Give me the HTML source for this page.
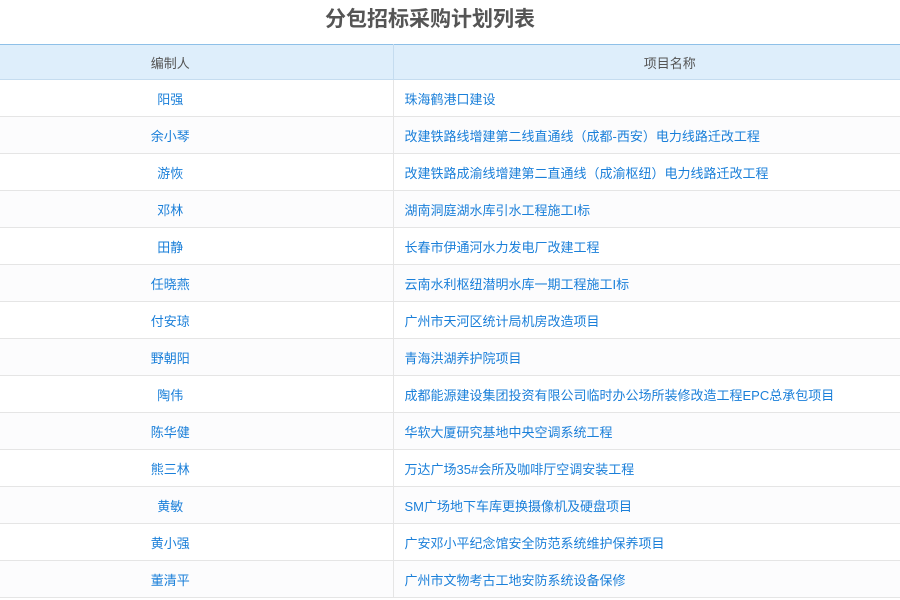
<!DOCTYPE html>
<html><head><meta charset="utf-8"><style>
body{margin:0;width:900px;height:600px;overflow:hidden;background:#fff;font-family:"Liberation Sans","Noto Sans CJK SC",sans-serif;}
h1{margin:0;height:44px;line-height:40px;text-align:center;font-size:21px;color:#555;font-weight:bold;padding-right:40px;}
table{border-collapse:collapse;width:900px;table-layout:fixed;}
th{height:34px;padding:0;background:#deeefb;color:#555;font-weight:normal;font-size:13px;border-top:1px solid #8ec0e8;border-bottom:1px solid #c5dcef;border-right:1px solid #c5dcef;}
th:last-child{padding-left:46px;}
td{height:36px;font-size:13px;color:#1a7fd9;border-bottom:1px solid #e5e5e5;border-right:1px solid #e5e5e5;padding:0;}
td:first-child,th:first-child{text-align:center;padding-right:52px;}
td:last-child{padding-left:11px;}
tr:nth-child(odd) td{background:#fcfcfd;}
th:last-child,td:last-child{border-right:none;}
</style></head><body>
<h1>分包招标采购计划列表</h1>
<table>
<colgroup><col style="width:393px"><col></colgroup>
<tr><th>编制人</th><th>项目名称</th></tr>
<tr><td>阳强</td><td>珠海鹤港口建设</td></tr>
<tr><td>余小琴</td><td>改建铁路线增建第二线直通线（成都-西安）电力线路迁改工程</td></tr>
<tr><td>游恢</td><td>改建铁路成渝线增建第二直通线（成渝枢纽）电力线路迁改工程</td></tr>
<tr><td>邓林</td><td>湖南洞庭湖水库引水工程施工I标</td></tr>
<tr><td>田静</td><td>长春市伊通河水力发电厂改建工程</td></tr>
<tr><td>任晓燕</td><td>云南水利枢纽潜明水库一期工程施工I标</td></tr>
<tr><td>付安琼</td><td>广州市天河区统计局机房改造项目</td></tr>
<tr><td>野朝阳</td><td>青海洪湖养护院项目</td></tr>
<tr><td>陶伟</td><td>成都能源建设集团投资有限公司临时办公场所装修改造工程EPC总承包项目</td></tr>
<tr><td>陈华健</td><td>华软大厦研究基地中央空调系统工程</td></tr>
<tr><td>熊三林</td><td>万达广场35#会所及咖啡厅空调安装工程</td></tr>
<tr><td>黄敏</td><td>SM广场地下车库更换摄像机及硬盘项目</td></tr>
<tr><td>黄小强</td><td>广安邓小平纪念馆安全防范系统维护保养项目</td></tr>
<tr><td>董清平</td><td>广州市文物考古工地安防系统设备保修</td></tr>
</table>
</body></html>
